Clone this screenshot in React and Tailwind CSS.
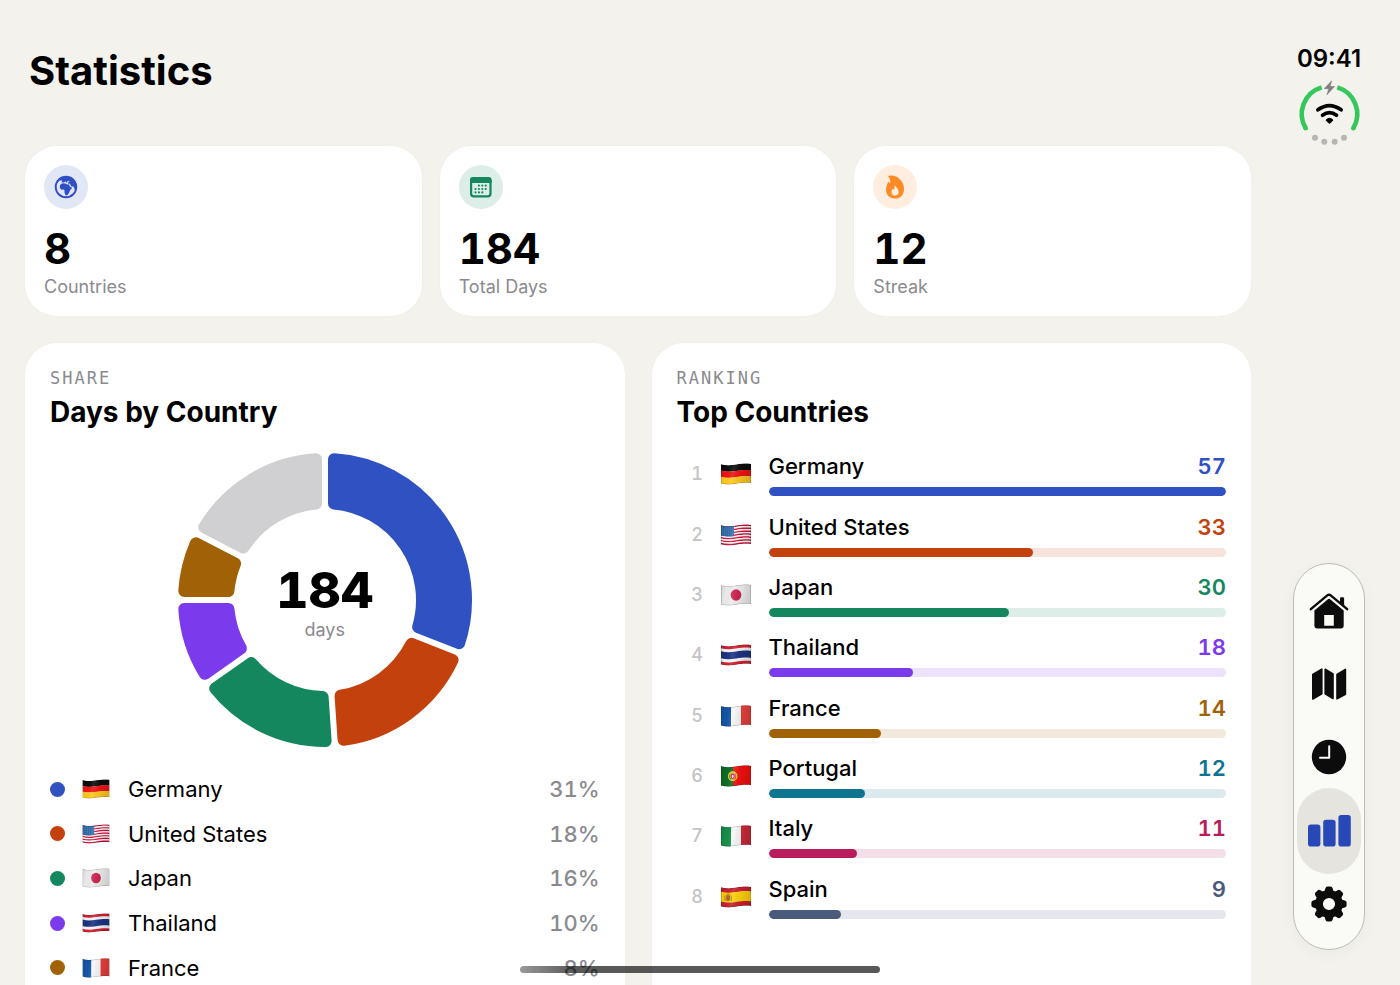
import React from "react";

const COUNTRIES = [
  { code: "de", name: "Germany", days: 57, share: 31, color: "#2f51c1", track: "#e0e5f6" },
  { code: "us", name: "United States", days: 33, share: 18, color: "#c2410c", track: "#f7e3dc" },
  { code: "jp", name: "Japan", days: 30, share: 16, color: "#14875f", track: "#dceee7" },
  { code: "th", name: "Thailand", days: 18, share: 10, color: "#7c3aed", track: "#ece2fc" },
  { code: "fr", name: "France", days: 14, share: 8, color: "#a16207", track: "#f2e8db" },
  { code: "pt", name: "Portugal", days: 12, color: "#0e7490", track: "#dceaee" },
  { code: "it", name: "Italy", days: 11, color: "#b91c5c", track: "#f4dee8" },
  { code: "es", name: "Spain", days: 9, color: "#4a5a7a", track: "#e5e6ee" },
];
const TOTAL = 184;
const OTHER_COLOR = "#d0d0d2";

/* ---------- flags ---------- */

// A horizontal stripe that follows the ripple of the cloth.
function band(a, b) {
  return `M0 ${a}C5 ${a + 1.3} 9 ${a + 1.2} 15 ${a + 0.3}C21 ${a - 0.6} 25 ${a - 1} 30 ${a - 0.3}L30 ${b - 0.3}C25 ${b - 1} 21 ${b - 0.6} 15 ${b + 0.3}C9 ${b + 1.2} 5 ${b + 1.3} 0 ${b}Z`;
}

const horizontal = (stripes) =>
  stripes.map(([a, b, c], i) => <path key={i} d={band(a, b)} fill={c} />);
const vertical = (stripes) =>
  stripes.map(([x, w, c]) => <rect key={x} x={x} y="-1" width={w} height="24" fill={c} />);

const FLAG_ART = {
  de: () => horizontal([[1.2, 7.8, "#0c0c0c"], [7.6, 14, "#f01414"], [13.8, 20.4, "#ffc91f"]]),
  us: () => (
    <>
      {horizontal(
        Array.from({ length: 13 }, (_, i) => [1.2 + i * 1.47, 2.7 + i * 1.47, i % 2 ? "#ffffff" : "#d3143c"])
      )}
      <path d="M0 1.2C5 2.5 9 2.4 13 1.8V12.2C9 12.8 5 12.8 0 11.5Z" fill="#2f6ba8" />
      {[4, 6, 8, 10].map((y) => (
        <path key={y} d={`M1.5 ${y}h11`} stroke="#b9d2ea" strokeWidth=".5" strokeDasharray=".6 1.4" />
      ))}
    </>
  ),
  jp: () => (
    <>
      {horizontal([[1.2, 20.4, "#eeeeee"]])}
      <ellipse cx="15" cy="11" rx="5.3" ry="5.8" fill="#cc1f4c" />
    </>
  ),
  th: () =>
    horizontal([
      [1.2, 20.4, "#f7f7f7"],
      [1.2, 4.2, "#d3202f"],
      [7.2, 14.2, "#1c3484"],
      [17.4, 20.4, "#d3202f"],
    ]),
  fr: () => vertical([[0, 10, "#1556a8"], [10, 10, "#f7f7f7"], [20, 10, "#e8403c"]]),
  pt: () => (
    <>
      {vertical([[0, 12, "#0b6e24"], [12, 18, "#f0100f"]])}
      <circle cx="11.7" cy="11.2" r="4.2" fill="none" stroke="#f6dc1c" strokeWidth="1.3" />
      <path d="M9.4 8.6h4.6v3.4c0 3-4.6 3-4.6 0z" fill="#e3192a" stroke="#fff" strokeWidth=".5" />
      <path d="M10.8 9.9h1.8v1.8c0 1.4-1.8 1.4-1.8 0z" fill="#fff" />
    </>
  ),
  it: () => vertical([[0, 10, "#149048"], [10, 10, "#f7f7f7"], [20, 10, "#cb2a3a"]]),
  es: () => (
    <>
      {horizontal([[1.2, 6, "#c8202c"], [5.8, 15.8, "#fdd10a"], [15.6, 20.4, "#c8202c"]])}
      <path d="M5.2 9.2h3.8v4c0 2.4-3.8 2.4-3.8 0z" fill="#b5622c" />
      <path d="M4 9.6v5.4M10.2 9.6v5.4M5.6 8.2h3" stroke="#96702c" strokeWidth=".9" />
    </>
  ),
};

function Flag({ code, name, scope, className }) {
  const id = `${scope}-${code}`;
  return (
    <svg viewBox="0 0 30 22" className={className} role="img" aria-label={`Flag of ${name}`}>
      <defs>
        <clipPath id={`${id}-clip`}>
          <path d={band(1.2, 20.4)} />
        </clipPath>
        <linearGradient id={`${id}-shade`} x1="0" x2="1" y1="0" y2="0.15">
          <stop offset="0" stopColor="#000" stopOpacity=".14" />
          <stop offset=".22" stopColor="#000" stopOpacity=".02" />
          <stop offset=".45" stopColor="#fff" stopOpacity=".1" />
          <stop offset=".72" stopColor="#000" stopOpacity=".06" />
          <stop offset="1" stopColor="#000" stopOpacity=".14" />
        </linearGradient>
      </defs>
      <g clipPath={`url(#${id}-clip)`}>
        {FLAG_ART[code]()}
        <rect y="-1" width="30" height="24" fill={`url(#${id}-shade)`} />
        <path d={band(1.2, 20.4)} fill="none" stroke="#000" strokeOpacity=".3" strokeWidth=".9" />
      </g>
    </svg>
  );
}

/* ---------- icons ---------- */

function GlobeIcon() {
  return (
    <svg viewBox="0 0 24 24" className="size-6" aria-hidden="true">
      <g fill="#2f4fc4">
        <path d="M5.9 10.6 7 8.9 9 8.3 11.4 8.500 12.400 9.3 15 9.4 16.100 11.900 17.900 12.500 17.600 13.700 15.900 15.400 15.300 17.600 13.700 19.800 12.200 20.600 11.300 19.900 10.500 17.500 10.500 15.300 9.500 14.600 7.300 14.700 5.900 13z" />
        <path d="M7.200 7.300 8.300 5.900 7.300 5.300 5 6 7 2.500 12 1.500 19 3.500 22.500 9 22.600 14.500 20.800 15.500 20.200 13 19 11 18.200 12 17.200 11.300 15.900 8.700 13.800 8.400 13.900 7.200 15.600 7 15.300 6.200 13.700 6.100 12.700 7.800 11.300 6.600 9.600 7.500z" />
      </g>
      <circle cx="12" cy="12" r="10.300" fill="none" stroke="#2f4fc4" strokeWidth="1.900" />
    </svg>
  );
}

function CalendarIcon() {
  const dots = [
    [9.9, 10.6], [13.3, 10.6], [16.7, 10.6],
    [6.5, 14], [9.9, 14], [13.3, 14], [16.7, 14],
    [6.5, 17.4], [9.9, 17.4], [13.3, 17.4],
  ];
  return (
    <svg viewBox="0 0 24 24" className="size-6" aria-hidden="true">
      <rect x="2.1" y="3" width="19.4" height="18.4" rx="2.8" fill="none" stroke="#14875f" strokeWidth="2.2" />
      <path d="M1 8V5.200A3.300 3.300 0 0 1 4.300 1.900h15a3.300 3.300 0 0 1 3.300 3.300V8z" fill="#14875f" />
      {dots.map(([x, y]) => (
        <circle key={`${x}-${y}`} cx={x} cy={y} r="1.1" fill="#14875f" />
      ))}
    </svg>
  );
}

function FlameIcon() {
  return (
    <svg viewBox="0 0 24 26" className="h-[26px] w-6" aria-hidden="true">
      <path
        fill="#fc8b26"
        d="M5.600 1.800C13.500.2 21 6.400 21 15.200c0 5.600-3.600 9.300-9 9.300-5.300 0-9-3.500-9-8.700 0-3 1.200-4.800 1.600-7.100.3-.8.700-1 1.300-.6l1.200 1.100c.6-2.300.1-4.600-1.600-6.300-.5-.5-.5-1 .1-1.100z"
      />
      <path
        fill="#fff0e2"
        d="M11.600 12.300c.2-.6.6-.6 1-.1 1.700 1.800 3 3.900 3 5.800 0 2.300-1.400 3.600-3.500 3.600s-3.600-1.300-3.600-3.400c0-1.300.5-2.200 1-3 .3-.4.6-.3.9.1l.6.7c.5-1.100.4-2.500.6-3.700z"
      />
    </svg>
  );
}

function HomeIcon() {
  return (
    <svg viewBox="0 0 40 40" className="size-10" aria-hidden="true">
      <path d="M1.800 18.200 18.300 4.400q1.700-1.400 3.400 0L38.200 18.200" fill="none" stroke="#0c0c0c" strokeWidth="2.4" strokeLinecap="round" strokeLinejoin="round" />
      <path d="M31 12.500V7.600q0-1.300 1.300-1.300h1.500q1.300 0 1.300 1.300v8z" fill="#0c0c0c" />
      <path
        fillRule="evenodd"
        fill="#0c0c0c"
        d="M18.600 8.400q1.400-1.200 2.800 0L34.700 19.500V34.600q0 3-3 3H8.400q-3 0-3-3V19.500zM15.200 24v10.800h9.600V24z"
      />
    </svg>
  );
}

function MapIcon() {
  return (
    <svg viewBox="0 0 40 40" className="size-10" aria-hidden="true" fill="#0c0c0c" stroke="#0c0c0c" strokeWidth="1.6" strokeLinejoin="round">
      <path d="M3.800 10.400 12.800 5.200V29.800L3.800 35z" />
      <path d="M16.200 5.200 24 10V34.600L16.200 29.800z" />
      <path d="M28 10.400 36.400 5.400V30.200L28 34.800z" />
    </svg>
  );
}

function ClockIcon() {
  return (
    <svg viewBox="0 0 40 40" className="size-10" aria-hidden="true">
      <circle cx="20" cy="20" r="17.2" fill="#0c0c0c" />
      <path d="M20.200 9.200V20.800H11" fill="none" stroke="#fafaf6" strokeWidth="2" strokeLinecap="round" strokeLinejoin="round" />
    </svg>
  );
}

function BarsIcon() {
  return (
    <svg viewBox="0 0 44 40" className="h-10 w-11" aria-hidden="true" fill="#2848b8">
      <rect x="1" y="13.6" width="12.4" height="22" rx="2.8" />
      <rect x="16.2" y="8.8" width="12.4" height="26.8" rx="2.8" />
      <rect x="31.4" y="4" width="12.4" height="31.6" rx="2.8" />
    </svg>
  );
}

function GearIcon() {
  return (
    <svg viewBox="0 0 40 40" className="size-10" aria-hidden="true">
      {[0, 45, 90, 135, 180, 225, 270, 315].map((a) => (
        <path key={a} transform={`rotate(${a} 20 20)`} d="M14.800 10.500 16.400 4.200Q16.800 2.400 18.500 2.400h3Q23.200 2.400 23.600 4.200L25.200 10.500z" fill="#0c0c0c" />
      ))}
      <circle cx="20" cy="20" r="10" fill="none" stroke="#0c0c0c" strokeWidth="7.8" />
    </svg>
  );
}

function StatusRing() {
  return (
    <svg viewBox="0 0 67 68" className="h-[68px] w-[67px]" role="img" aria-label="Battery charging, Wi-Fi connected">
      <g fill="none" stroke="#34c759" strokeWidth="4.6">
        <path d="M25.700 7.400A27.800 27.800 0 0 0 9.700 48.300" />
        <path d="M41.300 7.400A27.800 27.800 0 0 1 57.300 48.300" />
      </g>
      <circle cx="9.7" cy="48.3" r="2.3" fill="#34c759" />
      <circle cx="57.3" cy="48.3" r="2.3" fill="#34c759" />
      <path d="M35.600.8 28.300 8.700h4.500L30.900 14.800 38.600 6.500H34.100z" fill="#7f7f82" stroke="#7f7f82" strokeWidth=".6" strokeLinejoin="round" />
      <g fill="none" stroke="#000" strokeWidth="3.7" strokeLinecap="round">
        <path d="M21.900 29.800Q33.500 21.400 45.100 29.800" />
        <path d="M26.500 35.200Q33.500 30 40.500 35.200" />
      </g>
      <path d="M30 40.100Q33.500 36.500 37 40.100L34.500 42.800Q33.500 43.700 32.500 42.800z" fill="#000" stroke="#000" strokeLinejoin="round" />
      <g fill="#b6b6b4">
        <circle cx="19" cy="57.7" r="3" />
        <circle cx="28.3" cy="61.8" r="3" />
        <circle cx="38.7" cy="61.8" r="3" />
        <circle cx="48" cy="57.7" r="3" />
      </g>
    </svg>
  );
}

/* ---------- donut ---------- */

const OUTER = 147;
const INNER = 91;
const CORNER = 6;
const HALF_GAP = 3;

// The outline is inset by CORNER and stroked with round joins, which rounds every corner.
function slicePath(start, end) {
  const ro = OUTER - CORNER;
  const ri = INNER + CORNER;
  const inset = HALF_GAP + CORNER;
  const at = (r, a) => `${(150 + r * Math.sin(a)).toFixed(2)} ${(150 - r * Math.cos(a)).toFixed(2)}`;
  const o = Math.asin(inset / ro);
  const i = Math.asin(inset / ri);
  return `M${at(ro, start + o)}A${ro} ${ro} 0 0 1 ${at(ro, end - o)}L${at(ri, end - i)}A${ri} ${ri} 0 0 0 ${at(ri, start + i)}Z`;
}

function Donut() {
  const top = COUNTRIES.slice(0, 5);
  const shown = top.reduce((sum, c) => sum + c.days, 0);
  const slices = [...top, { code: "other", days: TOTAL - shown, color: OTHER_COLOR }];
  let angle = 0;
  return (
    <div className="relative grid size-[300px] place-items-center">
      <svg viewBox="0 0 300 300" className="absolute inset-0 size-full" role="img" aria-label="Days by country">
        {slices.map((s) => {
          const start = angle;
          angle += (s.days / TOTAL) * Math.PI * 2;
          return (
            <path key={s.code} d={slicePath(start, angle)} fill={s.color} stroke={s.color} strokeWidth={CORNER * 2} strokeLinejoin="round" />
          );
        })}
      </svg>
      <div className="relative flex flex-col items-center pt-1">
        <span className="text-[50px] leading-[56px] font-extrabold text-black tabular-nums">184</span>
        <span className="text-lg leading-6 text-[#8a8a8e]">days</span>
      </div>
    </div>
  );
}

/* ---------- page ---------- */

const STATS = [
  { label: "Countries", value: 8, Icon: GlobeIcon, tint: "bg-[#e2e7f6]" },
  { label: "Total Days", value: 184, Icon: CalendarIcon, tint: "bg-[#dceee7]" },
  { label: "Streak", value: 12, Icon: FlameIcon, tint: "bg-[#ffeee0]" },
];

const NAV = [
  { label: "Home", Icon: HomeIcon },
  { label: "Map", Icon: MapIcon },
  { label: "History", Icon: ClockIcon },
  { label: "Statistics", Icon: BarsIcon, active: true },
  { label: "Settings", Icon: GearIcon },
];

function StatCard({ label, value, Icon, tint }) {
  return (
    <div className="flex flex-col rounded-[32px] bg-white px-[19px] pt-[19px] pb-[17px] shadow-[0_0_3px_rgba(0,0,0,0.03)]">
      <span className={`grid size-11 place-items-center rounded-full ${tint}`}>
        <Icon />
      </span>
      <span className="mt-4 text-[42px] leading-12 font-bold text-black tabular-nums">{value}</span>
      <span className="mt-0.5 text-lg leading-6 text-[#8a8a8e]">{label}</span>
    </div>
  );
}

function Panel({ eyebrow, title, children }) {
  return (
    <section className="flex flex-col rounded-[32px] bg-white px-[25px] pt-[25px] pb-20 shadow-[0_0_3px_rgba(0,0,0,0.03)]">
      <p className="font-['DejaVu_Sans_Mono',monospace] text-[17px] leading-5 tracking-[2px] text-[#8a8a8e]">{eyebrow}</p>
      <h2 className="mt-1 text-[28px] leading-10 font-bold text-black">{title}</h2>
      {children}
    </section>
  );
}

export default function App() {
  return (
    <div className="relative flex h-screen overflow-hidden bg-[#f3f2ec] font-['Inter',sans-serif] text-black">
      <main className="min-w-0 flex-1 pt-[46px] pr-[7px] pl-[25px]">
        <h1 className="pl-1 text-[40px] leading-[50px] font-bold">Statistics</h1>

        <div className="mt-[50px] grid grid-cols-3 gap-[18px]">
          {STATS.map((s) => (
            <StatCard key={s.label} {...s} />
          ))}
        </div>

        <div className="mt-[27px] grid grid-cols-2 gap-[27px]">
          <Panel eyebrow="SHARE" title="Days by Country">
            <div className="mt-[18px] flex justify-center">
              <Donut />
            </div>
            <ul className="mt-[17px] grid h-[223px] grid-rows-5">
              {COUNTRIES.slice(0, 5).map((c) => (
                <li key={c.code} className="flex items-center text-[22px] leading-7">
                  <span className="size-[15px] rounded-full" style={{ backgroundColor: c.color }} />
                  <Flag code={c.code} name={c.name} scope="share" className="ml-[17px] h-5 w-7" />
                  <span className="ml-[18px] flex-1">{c.name}</span>
                  <span className="font-medium text-[#8a8a8e] tabular-nums">{c.share}%</span>
                </li>
              ))}
            </ul>
          </Panel>

          <Panel eyebrow="RANKING" title="Top Countries">
            <ol className="mt-3 grid h-[483px] grid-rows-8">
              {COUNTRIES.map((c, i) => (
                <li key={c.code} className="flex items-center">
                  <span className="w-[41px] text-center text-lg leading-6 font-medium text-[#c4c4c6] tabular-nums">{i + 1}</span>
                  <Flag code={c.code} name={c.name} scope="rank" className="ml-[3px] h-[22px] w-[30px]" />
                  <div className="ml-[18px] flex-1">
                    <div className="flex items-center justify-between text-[22px] leading-7">
                      <span className="font-medium">{c.name}</span>
                      <span className="font-semibold tabular-nums" style={{ color: c.color }}>{c.days}</span>
                    </div>
                    <div className="mt-[7px] h-[9px] overflow-hidden rounded-full" style={{ backgroundColor: c.track }}>
                      <div className="h-full rounded-full" style={{ width: `${(c.days / COUNTRIES[0].days) * 100}%`, backgroundColor: c.color }} />
                    </div>
                  </div>
                </li>
              ))}
            </ol>
          </Panel>
        </div>
      </main>

      <aside className="flex w-[142px] shrink-0 flex-col items-center pt-[45px] pb-[35px]">
        <time className="text-2xl leading-7 font-semibold">09:41</time>
        <div className="mt-[7px]">
          <StatusRing />
        </div>
        <nav aria-label="Main" className="mt-auto grid h-[387px] w-[72px] grid-rows-5 rounded-full border border-[#bdbdb8] bg-[#fafaf6] pt-[10px] pb-2 shadow-[0_4px_16px_rgba(0,0,0,0.04)]">
          {NAV.map(({ label, Icon, active }) => (
            <button key={label} type="button" aria-label={label} aria-current={active ? "page" : undefined} className="relative grid place-items-center">
              {active && <span className="absolute inset-x-[3px] -inset-y-[6px] rounded-full bg-[#e5e4de]" />}
              <span className="relative">
                <Icon />
              </span>
            </button>
          ))}
        </nav>
      </aside>

      <div className="absolute bottom-3 left-1/2 h-[7px] w-[360px] -translate-x-1/2 rounded-full bg-linear-to-r from-black/40 via-black/65 via-15% to-black/65" />
    </div>
  );
}
